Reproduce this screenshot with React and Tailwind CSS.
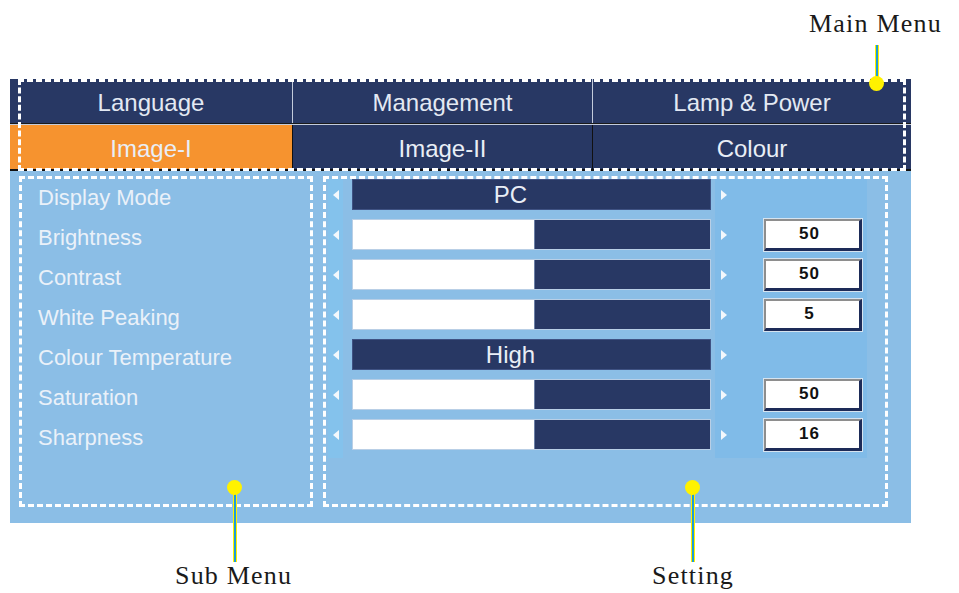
import React from 'react'

const mainTabs = ['Language', 'Management', 'Lamp & Power']
const subTabs = ['Image-I', 'Image-II', 'Colour']
const colWidths = ['w-[283px]', 'w-[300px]', 'w-[318px]']

const labels = ['Display Mode', 'Brightness', 'Contrast', 'White Peaking', 'Colour Temperature', 'Saturation', 'Sharpness']

const settings = [
  { type: 'text', text: 'PC' },
  { type: 'bar', value: '50' },
  { type: 'bar', value: '50' },
  { type: 'bar', value: '5' },
  { type: 'text', text: 'High' },
  { type: 'bar', value: '50' },
  { type: 'bar', value: '16' },
]

const ArrowLeft = () => (
  <svg width="6" height="10" viewBox="0 0 6 10">
    <polygon points="6,0 6,10 0,5" fill="#f4f8fc" />
  </svg>
)

const ArrowRight = () => (
  <svg width="6" height="10" viewBox="0 0 6 10">
    <polygon points="0,0 0,10 6,5" fill="#f4f8fc" />
  </svg>
)

// yellow/blue leader line
const Callout = ({ className, lineClass }) => (
  <div className={className}>
    <div className={`w-[4px] bg-[#1e9bd7] border-x border-[#fff200] ${lineClass}`} />
  </div>
)

const Dot = ({ className }) => (
  <div className={`absolute w-[15px] h-[15px] rounded-full bg-[#fff200] ${className}`} />
)

export default function App() {
  return (
    <div className="relative w-[959px] h-[593px] bg-white overflow-hidden font-['Liberation_Sans',Arial,sans-serif]">
      <div className="ml-[10px] pt-[79px] w-[901px]">
        {/* main menu tabs */}
        <div className="relative">
          <div className="flex h-[44px] bg-[#283864]">
            {mainTabs.map((t, i) => (
              <div
                key={t}
                className={`${colWidths[i]} flex items-center justify-center pt-[3px] text-[24px] text-[#e3e9f3] ${i < 2 ? 'border-r border-[#c3cbdb]' : ''}`}
              >
                {t}
              </div>
            ))}
          </div>
          <div className="h-[1px] bg-[#1a1a1a]" />
          <div className="h-[1px] bg-[#c3cbdb]" />
          <div className="flex h-[46px] bg-[#283864] border-b-2 border-[#111]">
            {subTabs.map((t, i) => (
              <div
                key={t}
                className={`${colWidths[i]} flex items-center justify-center pt-[3px] text-[24px] text-[#e9eef6] ${i === 0 ? 'bg-[#f6932f]' : ''} ${i < 2 ? 'border-r border-[#111]' : ''}`}
              >
                {t}
              </div>
            ))}
          </div>
          <div className="absolute left-[8px] top-0 w-[888px] h-[92px] border-[3px] border-dashed border-white" />
        </div>

        {/* body */}
        <div className="flex bg-[#8bbee6] pl-[9px] pt-[5px] h-[352px]">
          <div className="w-[294px] h-[331px] border-[3px] border-dashed border-white pl-[16px] pt-[3px]">
            <div className="flex flex-col gap-[9px]">
              {labels.map((l) => (
                <div key={l} className="h-[31px] flex items-center text-[22px] text-[#eaf1f9] whitespace-nowrap">
                  {l}
                </div>
              ))}
            </div>
          </div>

          <div className="ml-[10px] w-[565px] h-[331px] border-[3px] border-dashed border-white">
            <div className="flex items-start">
              <div className="ml-[2px] w-[15px] flex flex-col gap-[9px] pb-[8px] bg-[#84c2ec]">
                {settings.map((s, i) => (
                  <div key={i} className="h-[31px] flex items-center pl-[5px]">
                    <ArrowLeft />
                  </div>
                ))}
              </div>

              <div className="ml-[9px] w-[359px] flex flex-col gap-[9px]">
                {settings.map((s, i) =>
                  s.type === 'text' ? (
                    <div
                      key={i}
                      className="h-[31px] bg-[#283864] border border-[#3f5283] flex items-center justify-center pr-[42px] text-[24px] text-[#e9eef6]"
                    >
                      {s.text}
                    </div>
                  ) : (
                    <div key={i} className="h-[31px] flex border border-[#b9cfe6]">
                      <div className="w-[181px] bg-white" />
                      <div className="flex-1 bg-[#283864] border-l border-[#6b7fa6]" />
                    </div>
                  )
                )}
              </div>

              <div className="ml-[4px] w-[152px] flex flex-col gap-[9px] pb-[8px] bg-[#80bbe8]">
                {settings.map((s, i) => (
                  <div key={i} className="h-[31px] flex items-center pl-[6px]">
                    <ArrowRight />
                    {s.type === 'bar' && (
                      <div className="ml-[37px] w-[98px] h-[32px] flex items-center justify-center bg-white border-t-2 border-l-2 border-t-[#8e8e8e] border-l-[#8e8e8e] border-b-[3px] border-r-[3px] border-b-[#1d2b58] border-r-[#1d2b58] shadow-[0_0_0_1px_#d6e3ef] text-[17px] font-bold tracking-[1px] text-[#111] pr-[6px]">
                        {s.value}
                      </div>
                    )}
                  </div>
                ))}
              </div>
            </div>
          </div>
        </div>
      </div>

      {/* annotations */}
      <div className="absolute left-[809px] top-[10px] text-[26px] leading-[27px] tracking-[1.2px] text-[#1a1a1a] font-['Liberation_Serif','Times_New_Roman',serif] whitespace-nowrap">
        Main Menu
      </div>
      <Callout className="absolute left-[875px] top-[45px]" lineClass="h-[38px]" />
      <Dot className="left-[869px] top-[76px]" />

      <Callout className="absolute left-[233px] top-[490px]" lineClass="h-[72px]" />
      <Dot className="left-[227px] top-[480px]" />
      <div className="absolute left-[175px] top-[562px] text-[26px] leading-[27px] tracking-[1.2px] text-[#1a1a1a] font-['Liberation_Serif','Times_New_Roman',serif] whitespace-nowrap">
        Sub Menu
      </div>

      <Callout className="absolute left-[691px] top-[490px]" lineClass="h-[72px]" />
      <Dot className="left-[685px] top-[480px]" />
      <div className="absolute left-[652px] top-[562px] text-[26px] leading-[27px] tracking-[1.2px] text-[#1a1a1a] font-['Liberation_Serif','Times_New_Roman',serif] whitespace-nowrap">
        Setting
      </div>
    </div>
  )
}
